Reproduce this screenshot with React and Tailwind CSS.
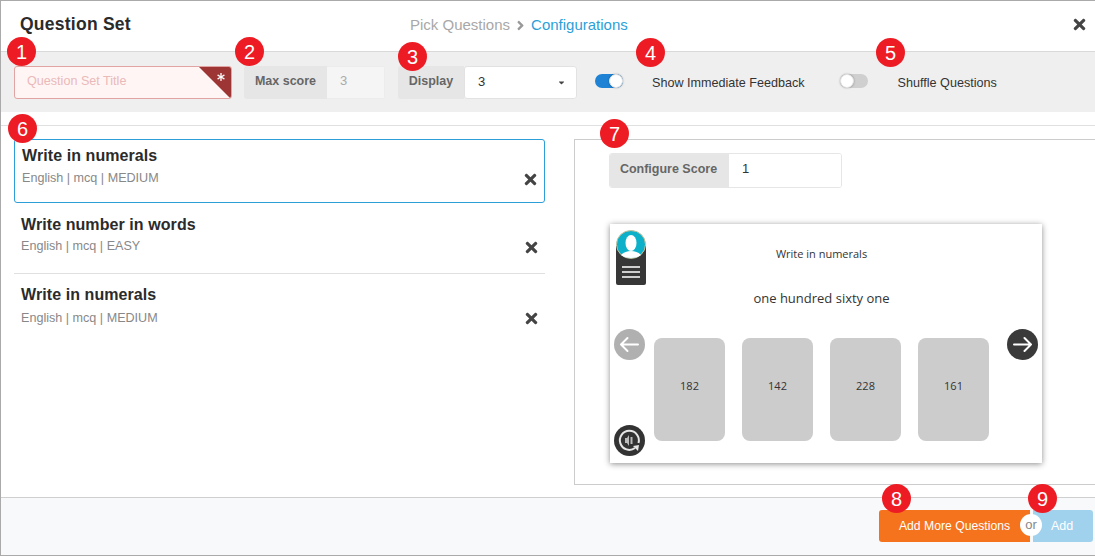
import React from "react";
import { FaTimes, FaAsterisk, FaCaretDown, FaAngleRight } from "react-icons/fa";

function Badge({ className, children }) {
  return (
    <div className={"absolute z-20 flex h-[29px] w-[29px] items-center justify-center rounded-full bg-[#ed1c24] text-[20px] leading-none text-white " + className}>
      {children}
    </div>
  );
}

function Toggle({ on }) {
  return (
    <div className={"flex h-[14px] w-[28px] items-center rounded-full " + (on ? "justify-end bg-[#1e83d4]" : "justify-start bg-[#cfcfcf]")}>
      <div className="h-[14px] w-[14px] rounded-full border border-[#e4e4e4] bg-white shadow-[0_0_2px_rgba(0,0,0,0.35)]" />
    </div>
  );
}

function Question({ title, meta, className, iconClass, metaClass }) {
  return (
    <div className={"relative " + className}>
      <div className="text-[16px] font-bold leading-[20px] tracking-[0.08px] text-[#2b2b2b]">{title}</div>
      <div className={"text-[12.6px] leading-[16px] text-[#888] " + metaClass}>{meta}</div>
      <FaTimes className={"absolute text-[17px] text-[#444] " + iconClass} />
    </div>
  );
}

function Choice({ children }) {
  return (
    <div className="flex h-[103px] w-[71px] items-center justify-center rounded-[8px] bg-[#cccccc] pb-[6px] text-[11px] text-[#333]">
      {children}
    </div>
  );
}

function RoundArrow({ dir, className }) {
  const d = dir === "left" ? "M24 15.5H7M13.5 9l-6.5 6.5 6.5 6.5" : "M7 15.5h17M17.5 9l6.5 6.5-6.5 6.5";
  return (
    <svg viewBox="0 0 31 31" className={"h-[31px] w-[31px] shrink-0 " + className}>
      <circle cx="15.5" cy="15.5" r="15.5" fill="currentColor" />
      <path d={d} fill="none" stroke="#fff" strokeWidth="2" strokeLinecap="round" strokeLinejoin="round" />
    </svg>
  );
}

export default function App() {
  return (
    <div className="relative flex h-[556px] w-[1095px] flex-col overflow-hidden border border-r-0 border-[#aaaaaa] bg-white text-[13px] [font-family:'Liberation_Sans',Arial,sans-serif]">
      {/* Header */}
      <div className="relative flex h-[51px] shrink-0 items-center border-b border-[#d9d9d9] pb-[3px] pl-[19px] pr-[7px]">
        <div className="w-[111px] whitespace-nowrap text-[17.5px] font-bold tracking-[0.25px] text-[#2b2b2b]">Question Set</div>
        <div className="ml-[279px] mt-[2px] flex items-center text-[15px] text-[#a8a8a8]">
          <span>Pick Questions</span>
          <FaAngleRight className="mx-[3px] text-[15px] text-[#999]" />
          <span className="text-[#2c9fd9]">Configurations</span>
        </div>
        <FaTimes className="ml-auto text-[17px] text-[#444]" />
      </div>

      {/* Toolbar */}
      <div className="flex h-[60px] shrink-0 items-center bg-[#efefef] pl-[13px] text-[#333]">
        <div className="relative flex h-[33px] w-[218px] items-center overflow-hidden rounded-[3px] border border-[#e2a3a3] bg-[#fff5f4] pb-[2px] pl-[12px] text-[12.6px] text-[#eab9b9]">
          Question Set Title
          <svg viewBox="0 0 32 32" className="absolute right-0 top-0 h-[32px] w-[32px]">
            <path d="M0 0H32V32Z" fill="#9e3535" />
          </svg>
          <FaAsterisk className="absolute right-[6px] top-[6px] text-[8px] text-white" />
        </div>

        <div className="ml-[12px] flex h-[33px] w-[141px] overflow-hidden rounded-[3px]">
          <div className="flex w-[83px] items-center justify-center bg-[#e6e6e6] pb-[2px] text-[12.5px] font-bold text-[#666]">Max score</div>
          <div className="flex flex-1 items-center border border-l-0 border-[#ececec] bg-[#f5f5f5] pb-[2px] pl-[13px] text-[#aaa]">3</div>
        </div>

        <div className="ml-[13px] flex h-[33px] w-[179px] overflow-hidden rounded-[3px]">
          <div className="flex w-[66px] items-center justify-center bg-[#e6e6e6] pb-[2px] text-[12.5px] font-bold text-[#666]">Display</div>
          <div className="flex flex-1 items-center justify-between rounded-[3px] border border-[#e2e2e2] bg-white pl-[13px] pr-[10px] text-[#333]">
            3
            <FaCaretDown className="text-[9px] text-[#444]" />
          </div>
        </div>

        <div className="ml-[18px] mt-[-2px]"><Toggle on /></div>
        <div className="ml-[29px] mt-[2px] text-[12.6px] text-[#333]">Show Immediate Feedback</div>
        <div className="ml-[35px] mt-[-2px]"><Toggle /></div>
        <div className="ml-[30px] mt-[2px] text-[12.6px] text-[#333]">Shuffle Questions</div>
      </div>

      {/* Main */}
      <div className="mt-[13px] flex min-h-0 flex-1 border-t border-[#e0e0e0] pl-[13px] pt-[13px]">
        <div className="w-[531px] shrink-0">
          <Question
            title="Write in numerals"
            meta="English | mcq | MEDIUM"
            className="h-[64px] rounded-[3px] border border-[#2c9fd9] pl-[7px] pt-[6px]"
            iconClass="right-[5px] top-[31px]"
            metaClass="mt-[4px]"
          />
          <Question
            title="Write number in words"
            meta="English | mcq | EASY"
            className="h-[71px] border-b border-[#e0e0e0] pl-[7px] pt-[12px]"
            iconClass="right-[5px] top-[36px]"
            metaClass="mt-[3px]"
          />
          <Question
            title="Write in numerals"
            meta="English | mcq | MEDIUM"
            className="h-[70px] pl-[7px] pt-[11px]"
            iconClass="right-[5px] top-[36px]"
            metaClass="mt-[5px]"
          />
        </div>

        <div className="ml-[29px] flex h-[346px] flex-1 flex-col border border-r-0 border-[#cccccc] pl-[34px] pt-[13px]">
          <div className="flex h-[35px] w-[233px] overflow-hidden rounded-[3px] border border-[#e6e6e6]">
            <div className="flex w-[119px] items-center justify-center bg-[#e6e6e6] pb-[3px] pr-[2px] text-[12.5px] font-bold text-[#666]">Configure Score</div>
            <div className="flex flex-1 items-center bg-white pb-[4px] pl-[13px] text-[#333]">1</div>
          </div>

          <div className="relative ml-[1px] mt-[36px] h-[239px] w-[432px] bg-white shadow-[0_1px_6px_rgba(0,0,0,0.45)] [font-family:'Open_Sans',sans-serif]">
            <div className="absolute left-[6px] top-[6px] h-[55px] w-[30px]">
              <div className="absolute bottom-0 left-0 h-[39px] w-[30px] rounded-b-[2px] bg-[#373737]" />
              <svg viewBox="0 0 30 29" className="absolute left-0 top-0 h-[29px] w-[30px]">
                <ellipse cx="15" cy="14.5" rx="14.5" ry="14" fill="#0cb1c9" stroke="#c9bf98" strokeWidth="1" />
                <ellipse cx="15" cy="13" rx="5.5" ry="8" fill="#fff" />
                <path d="M5 25c3-3 6-4 10-4s7 1 10 4c-4 4-16 4-20 0Z" fill="#fff" />
              </svg>
              <div className="absolute left-[6px] top-[36px] flex flex-col gap-[3px]">
                <div className="h-[2px] w-[18px] bg-[#cfcfcf]" />
                <div className="h-[2px] w-[18px] bg-[#cfcfcf]" />
                <div className="h-[2px] w-[18px] bg-[#cfcfcf]" />
              </div>
            </div>

            <div className="pr-[9px] pt-[22px] text-center text-[11px] leading-[16px] text-[#333]">Write in numerals</div>
            <div className="mt-[27px] pr-[9px] text-center text-[13px] leading-[18px] text-[#333]">one hundred sixty one</div>

            <div className="absolute left-[44px] top-[114px] flex gap-[17px]">
              <Choice>182</Choice>
              <Choice>142</Choice>
              <Choice>228</Choice>
              <Choice>161</Choice>
            </div>
            <RoundArrow dir="left" className="absolute left-[4px] top-[105px] text-[#b0b0b0]" />
            <RoundArrow dir="right" className="absolute left-[397px] top-[105px] text-[#3a3a3a]" />
            <svg viewBox="0 0 31 31" className="absolute left-[4px] top-[201px] h-[31px] w-[31px]">
              <circle cx="15.5" cy="15.5" r="15.5" fill="#333" />
              <path d="M21 23a9.5 9.5 0 1 1 3.5-5" fill="none" stroke="#e6e6e6" strokeWidth="2" />
              <path d="M19 21l6-1-1 6Z" fill="#e6e6e6" />
              <path d="M11 13h2l2-3v11l-2-3h-2Z" fill="#bbb" />
              <path d="M17.5 12v7" stroke="#bbb" strokeWidth="2" />
            </svg>
          </div>
        </div>
      </div>

      {/* Footer */}
      <div className="flex h-[58px] shrink-0 items-start justify-end border-t border-[#cfcfcf] bg-[#f8f9fb] pr-[2px] pt-[12px] text-white">
        <div className="relative flex h-[32px] w-[151px] items-center justify-center rounded-l-[3px] bg-[#f5731c] pl-[6px] pr-[6px] text-[12.2px]">
          Add More Questions
          <div className="absolute right-[-12px] top-[4px] z-10 flex h-[22px] w-[22px] items-center justify-center rounded-full bg-white text-[13px] text-[#888]">or</div>
        </div>
        <div className="ml-[3px] flex h-[32px] w-[60px] items-center justify-center rounded-r-[3px] bg-[#a0d2ee] pr-[2px] text-[12.5px]">Add</div>
      </div>

      {/* Callouts */}
      <Badge className="left-[6px] top-[36px]">1</Badge>
      <Badge className="left-[234px] top-[36px]">2</Badge>
      <Badge className="left-[397px] top-[41px]">3</Badge>
      <Badge className="left-[635px] top-[37px]">4</Badge>
      <Badge className="left-[875px] top-[37px]">5</Badge>
      <Badge className="left-[7px] top-[113px]">6</Badge>
      <Badge className="left-[599px] top-[118px]">7</Badge>
      <Badge className="left-[881px] top-[483px]">8</Badge>
      <Badge className="left-[1027px] top-[483px]">9</Badge>
    </div>
  );
}
